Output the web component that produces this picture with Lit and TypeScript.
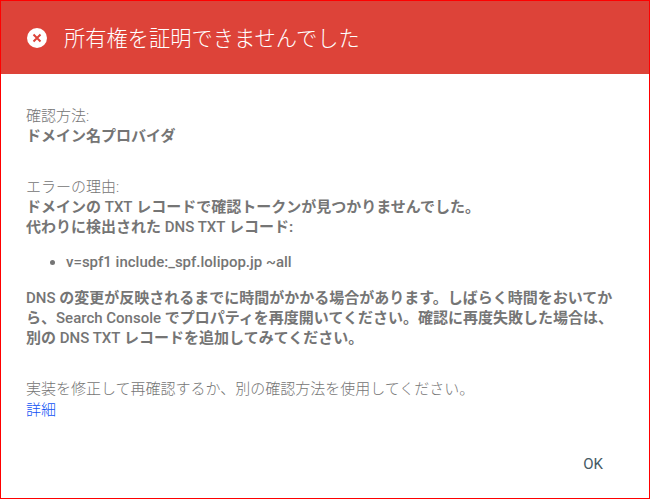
import { LitElement, html, css } from "lit";
import { customElement } from "lit/decorators.js";

@customElement("app-root")
export class AppRoot extends LitElement {
  static styles = css`
    :host {
      display: block;
      width: 650px;
      height: 499px;
      box-sizing: border-box;
      border: 1px solid #f00;
      background: #fff;
      overflow: hidden;
      font-family: Roboto, "Noto Sans CJK JP", sans-serif;
      font-size: 15px;
      line-height: 20px;
      color: #757575;
    }
    .head {
      height: 73px;
      background: #dd4339;
      display: flex;
      align-items: center;
      padding-left: 26px;
      gap: 17px;
      color: #fff;
      font-size: 21.25px;
      font-weight: 300;
    }
    .head span { padding-top: 2px; }
    .head svg { display: block; flex: none; }
    .body { padding: 32px 25px 0; }
    .light { font-weight: 300; }
    .bold { font-weight: 700; }
    .lat { font-weight: 500; }
    .sec2 { margin-top: 31px; }
    ul { margin: 15px 0 0; padding-left: 40px; line-height: 20px; }
    p { margin: 16px 0 0; }
    .sec3 { margin-top: 31px; }
    a { color: #0f52f5; font-weight: 300; text-decoration: none; display: block; margin-top: 1px; }
    .foot { display: flex; justify-content: flex-end; padding: 34px 46px 0 0; }
    .ok { color: #455a64; font-size: 15px; font-weight: 400; }
  `;

  render() {
    return html`
      <div class="head">
        <svg width="20" height="20" viewBox="0 0 20 20">
          <circle cx="10" cy="10" r="10" fill="#fff"></circle>
          <path d="M6.5 6.5 13.5 13.5M13.5 6.5 6.5 13.5" stroke="#dd4339" stroke-width="2" fill="none"></path>
        </svg>
        <span>所有権を証明できませんでした</span>
      </div>
      <div class="body">
        <div class="light">確認方法:</div>
        <div class="bold">ドメイン名プロバイダ</div>
        <div class="sec2">
          <div class="light">エラーの理由:</div>
          <div class="bold">ドメインの <span class="lat">TXT</span> レコードで確認トークンが見つかりませんでした。</div>
          <div class="bold">代わりに検出された <span class="lat">DNS TXT</span> レコード:</div>
        </div>
        <ul class="bold"><li><span class="lat">v=spf1 include:_spf.lolipop.jp ~all</span></li></ul>
        <p class="bold"><span class="lat">DNS</span> の変更が反映されるまでに時間がかかる場合があります。しばらく時間をおいてから、<span class="lat">Search Console</span> でプロパティを再度開いてください。確認に再度失敗した場合は、別の <span class="lat">DNS TXT</span> レコードを追加してみてください。</p>
        <div class="sec3">
          <div class="light">実装を修正して再確認するか、別の確認方法を使用してください。</div>
          <a href="#">詳細</a>
        </div>
      </div>
      <div class="foot"><span class="ok">OK</span></div>
    `;
  }
}
